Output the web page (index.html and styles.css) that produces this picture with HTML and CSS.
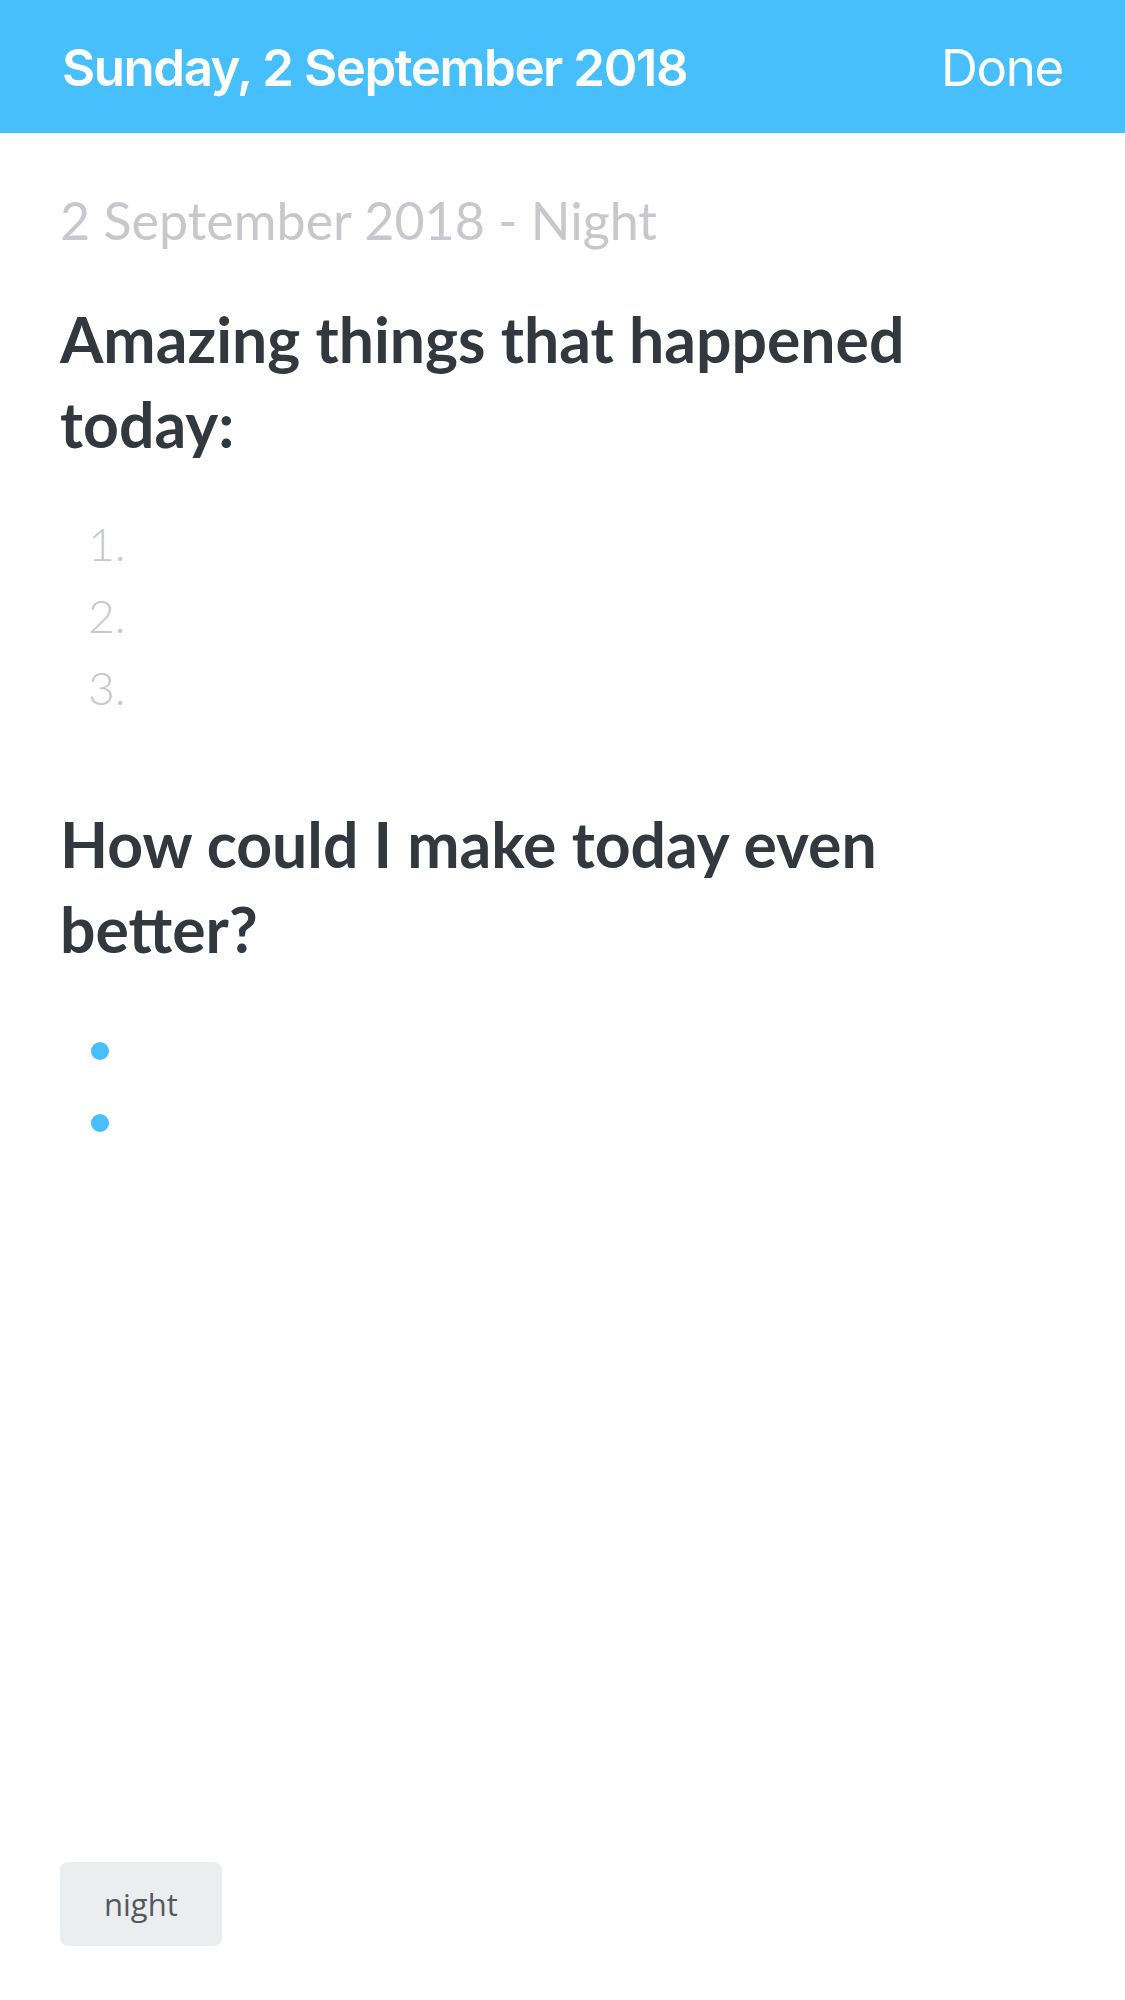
FILE: index.html
```html
<!DOCTYPE html>
<html>
<head>
<meta charset="utf-8">
<link rel="stylesheet" href="styles.css">
</head>
<body>
<div class="page">
  <header class="navbar">
    <div class="nav-title">Sunday, 2 September 2018</div>
    <div class="nav-done">Done</div>
  </header>
  <main class="content">
    <div class="subtitle">2 September 2018 - Night</div>
    <h2 class="heading heading-first">Amazing things that happened today:</h2>
    <ol class="numbered">
      <li class="num-item"><span class="num">1.</span></li>
      <li class="num-item"><span class="num">2.</span></li>
      <li class="num-item"><span class="num">3.</span></li>
    </ol>
    <h2 class="heading heading-second">How could I make today even better?</h2>
    <ul class="bullets">
      <li class="bullet-item"><span class="dot"></span></li>
      <li class="bullet-item"><span class="dot"></span></li>
    </ul>
  </main>
  <footer class="tags">
    <span class="tag">night</span>
  </footer>
</div>
</body>
</html>
```

FILE: styles.css
```css
html, body {
  margin: 0;
  padding: 0;
  background: #ffffff;
}

.page {
  min-height: 2000px;
  display: flex;
  flex-direction: column;
  font-family: Lato, "Open Sans", sans-serif;
}

.navbar {
  height: 133px;
  background: #47bffc;
  display: flex;
  align-items: center;
  justify-content: space-between;
  padding: 0 62px 0 62px;
  color: #ffffff;
  box-sizing: border-box;
}

.nav-title {
  font-family: Inter, "Liberation Sans", sans-serif;
  font-weight: 600;
  font-size: 51px;
  letter-spacing: -1.45px;
  line-height: 60px;
  padding-top: 2px;
}

.nav-done {
  font-family: Inter, "Liberation Sans", sans-serif;
  font-weight: 400;
  font-size: 51px;
  letter-spacing: -1.3px;
  line-height: 60px;
  padding-top: 2px;
}

.content {
  padding: 0 60px;
  flex: 1;
}

.subtitle {
  margin-top: 57px;
  font-size: 52px;
  line-height: 60px;
  color: #c8c8cc;
  font-weight: 400;
}

.heading {
  margin: 0;
  font-size: 62.5px;
  line-height: 85px;
  font-weight: 700;
  color: #32383e;
  max-width: 900px;
}

.heading-first {
  margin-top: 46px;
}

.heading-second {
  margin-top: 77px;
}

.numbered {
  list-style: none;
  margin: 42px 0 0 0;
  padding: 0 0 0 28px;
}

.num-item {
  height: 72px;
  line-height: 72px;
}

.num {
  font-size: 46px;
  font-weight: 300;
  color: #c8c8cc;
}

.bullets {
  list-style: none;
  margin: 44px 0 0 0;
  padding: 0 0 0 31px;
}

.bullet-item {
  height: 72px;
  display: flex;
  align-items: center;
}

.dot {
  width: 18px;
  height: 18px;
  border-radius: 50%;
  background: #47bffc;
}

.tags {
  padding: 0 60px 54px 60px;
  display: flex;
}

.tag {
  display: inline-block;
  height: 84px;
  line-height: 84px;
  padding: 0 44px;
  background: #ebedef;
  border-radius: 8px;
  font-family: "Open Sans", sans-serif;
  font-size: 31px;
  color: #55595e;
}
```
